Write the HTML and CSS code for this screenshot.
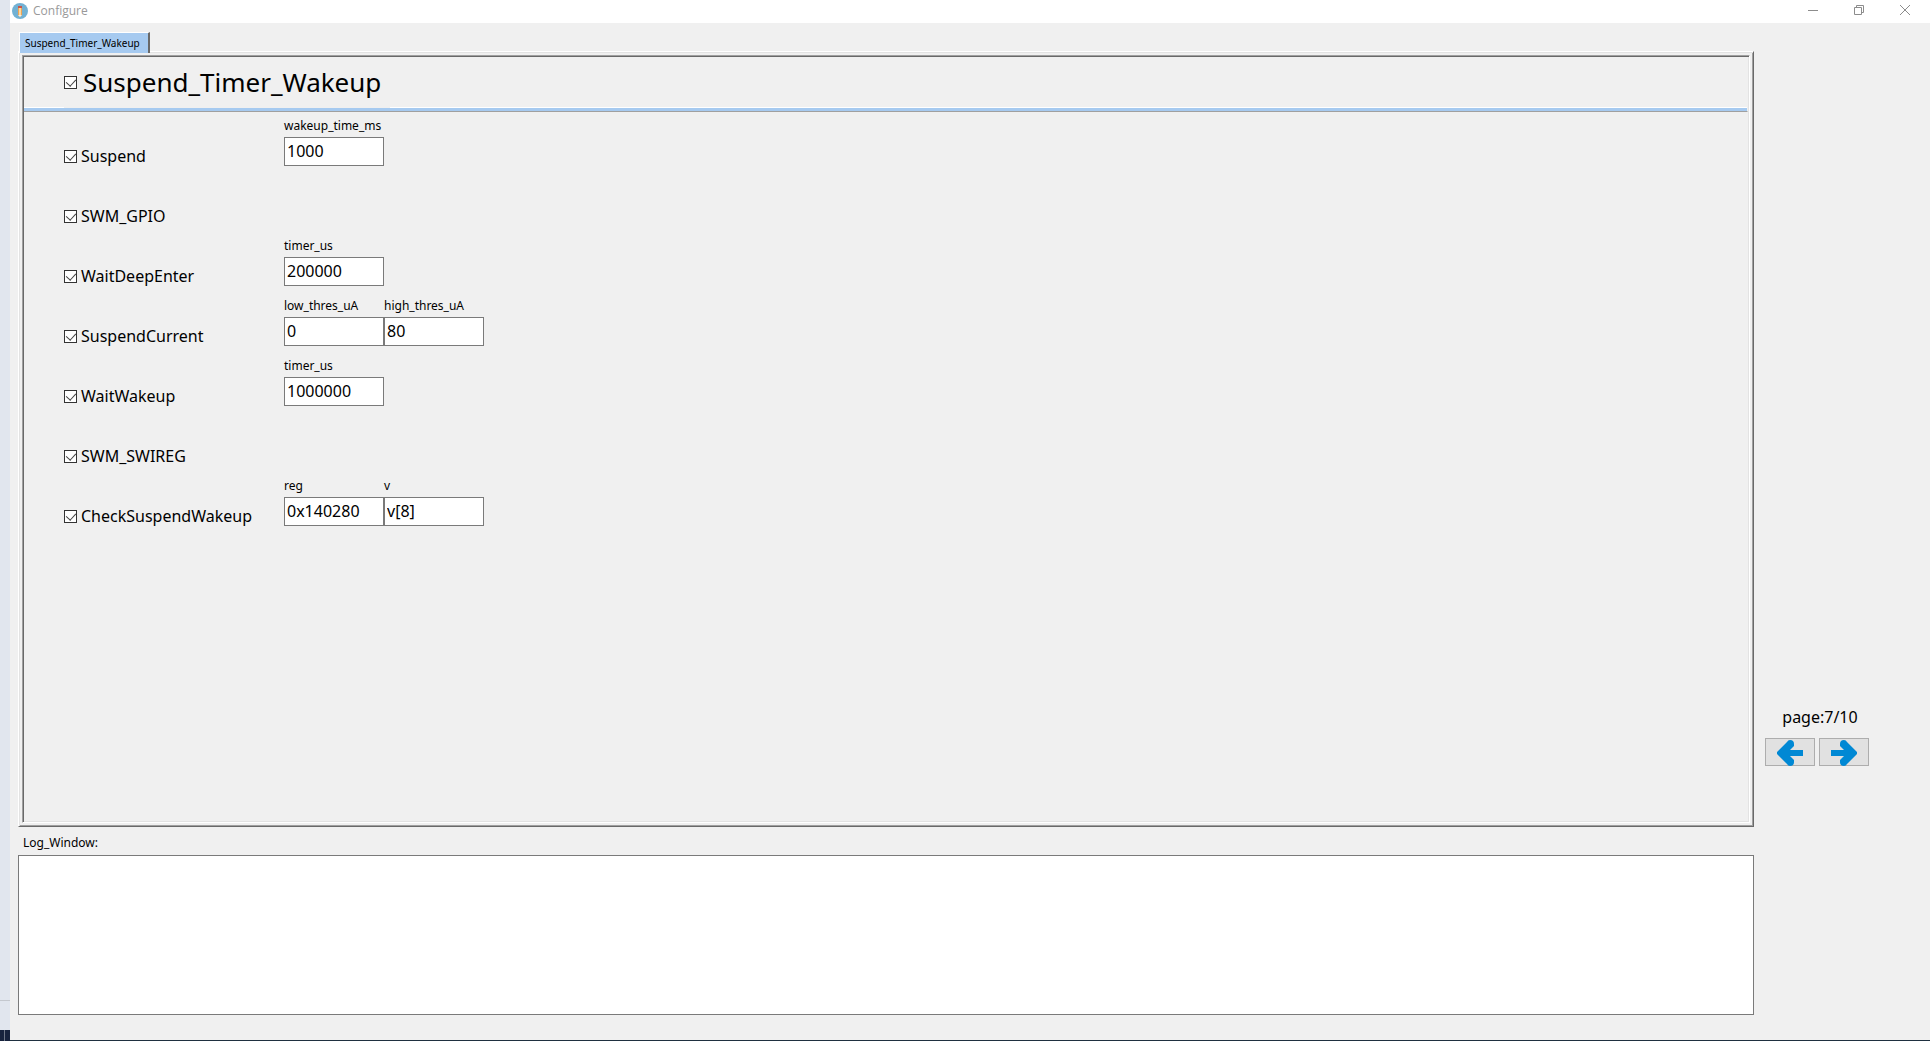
FILE: index.html
```
<!DOCTYPE html>
<html lang="en">
<head>
    <meta charset="utf-8">
    <title>Configure</title>
    <link rel="stylesheet" href="styles.css">
</head>
<body>
    <div class="desktop">
        <div class="desktop-panel"></div>
        <div class="desktop-taskbar"></div>
    </div>

    <div class="window">
        <header class="titlebar">
            <svg class="app-icon" width="16" height="16" viewBox="0 0 16 16">
                <circle cx="8" cy="8" r="8" fill="#72b1d3"/>
                <path d="M6 3h4v3H6z" fill="#c8564b"/>
                <path d="M6 5h4v7l-2 2-2-2z" fill="#f0a552"/>
                <path d="M7 5h2v7H7z" fill="#fbd9a0"/>
                <path d="M6 12h4l-2 2z" fill="#f5efe6"/>
            </svg>
            <span class="titlebar-text">Configure</span>
            <div class="titlebar-buttons">
                <button type="button" aria-label="Minimize">
                    <svg width="10" height="10" viewBox="0 0 10 10"><path d="M0 5.5h10"/></svg>
                </button>
                <button type="button" aria-label="Restore">
                    <svg width="10" height="10" viewBox="0 0 10 10"><path d="M.5 2.5h7v7h-7zM2.5 2.5v-2h7v7h-2"/></svg>
                </button>
                <button type="button" aria-label="Close">
                    <svg width="10" height="10" viewBox="0 0 10 10"><path d="M0 0l10 10M10 0L0 10"/></svg>
                </button>
            </div>
        </header>

        <div class="content">
            <main class="main">
                <button type="button" class="tab">Suspend_Timer_Wakeup</button>
                <div class="notebook">
                    <form class="page" id="config_form">
                        <div class="page-header">
                            <label class="check check-title"><input type="checkbox" checked>Suspend_Timer_Wakeup</label>
                        </div>

                        <div class="row">
                            <label class="check"><input type="checkbox" checked>Suspend</label>
                            <div class="field">
                                <label for="wakeup_time_ms">wakeup_time_ms</label>
                                <input type="text" id="wakeup_time_ms" value="1000">
                            </div>
                        </div>
                        <div class="row">
                            <label class="check"><input type="checkbox" checked>SWM_GPIO</label>
                        </div>
                        <div class="row">
                            <label class="check"><input type="checkbox" checked>WaitDeepEnter</label>
                            <div class="field">
                                <label for="enter_timer_us">timer_us</label>
                                <input type="text" id="enter_timer_us" value="200000">
                            </div>
                        </div>
                        <div class="row">
                            <label class="check"><input type="checkbox" checked>SuspendCurrent</label>
                            <div class="field">
                                <label for="low_thres">low_thres_uA</label>
                                <input type="text" id="low_thres" value="0">
                            </div>
                            <div class="field">
                                <label for="high_thres">high_thres_uA</label>
                                <input type="text" id="high_thres" value="80">
                            </div>
                        </div>
                        <div class="row">
                            <label class="check"><input type="checkbox" checked>WaitWakeup</label>
                            <div class="field">
                                <label for="wakeup_timer_us">timer_us</label>
                                <input type="text" id="wakeup_timer_us" value="1000000">
                            </div>
                        </div>
                        <div class="row">
                            <label class="check"><input type="checkbox" checked>SWM_SWIREG</label>
                        </div>
                        <div class="row">
                            <label class="check"><input type="checkbox" checked>CheckSuspendWakeup</label>
                            <div class="field">
                                <label for="reg">reg</label>
                                <input type="text" id="reg" value="0x140280">
                            </div>
                            <div class="field">
                                <label for="v">v</label>
                                <input type="text" id="v" value="v[8]">
                            </div>
                        </div>
                    </form>
                </div>

                <label class="log-label" for="log">Log_Window:</label>
                <textarea class="log" id="log"></textarea>
            </main>

            <aside class="pager">
                <div class="pager-text">page:7/10</div>
                <div class="pager-buttons">
                    <button type="button" aria-label="Previous page">
                        <svg width="26" height="26" viewBox="0 0 26 26"><path d="M0 12L10 2Q11 0 13 0Q17 0 17 4V6L13 10H26V16H13L17 20V22Q17 26 13 26Q11 26 10 24L0 14z"/></svg>
                    </button>
                    <button type="button" aria-label="Next page">
                        <svg width="26" height="26" viewBox="0 0 26 26"><path d="M26 12L16 2Q15 0 13 0Q9 0 9 4V6L13 10H0V16H13L9 20V22Q9 26 13 26Q15 26 16 24L26 14z"/></svg>
                    </button>
                </div>
            </aside>
        </div>
    </div>
</body>
</html>
```
FILE: styles.css
```
* {
    box-sizing: border-box;
}

body {
    margin: 0;
    min-height: 100vh;
    display: flex;
    background: #f0f0f0;
    color: #000;
    font-family: "Noto Sans", Tahoma, sans-serif;
    font-size: 16px;
}

button, input, textarea {
    font-family: inherit;
    margin: 0;
}

/* strip of desktop left of the window */
.desktop {
    width: 10px;
    display: flex;
    flex-direction: column;
    background: #e1e6ee;
}

.desktop-panel {
    flex: 1;
    border-bottom: 1px solid #c4c8ce;
    margin-bottom: 29px;
}

.desktop-taskbar {
    height: 11px;
    background: linear-gradient(90deg, #17233d 4px, #6d7686 4px, #6d7686 5px, #17233d 5px);
}

.window {
    flex: 1;
    display: flex;
    flex-direction: column;
    border-bottom: 1px solid #1f3040;
}

.titlebar {
    height: 23px;
    display: flex;
    align-items: center;
    padding: 0 2px 1px;
    background: #fff;
}

.titlebar-text {
    margin-left: 5px;
    color: #999;
    font-family: "Open Sans", "Segoe UI", sans-serif;
    font-size: 12px;
    line-height: 22px;
}

.titlebar-buttons {
    margin-left: auto;
    display: flex;
}

.titlebar-buttons button {
    width: 46px;
    height: 20px;
    padding: 0 0 2px;
    border: 0;
    background: none;
    line-height: 0;
}

.titlebar-buttons path {
    fill: none;
    stroke: #8c8c8c;
}

.content {
    flex: 1;
    display: flex;
}

.main {
    flex: 1;
    display: flex;
    flex-direction: column;
    padding: 9px 0 25px 8px;
}

.tab {
    align-self: flex-start;
    position: relative;
    height: 21px;
    margin: 0 0 -2px 1px;
    padding: 0 8px 0 5px;
    border: 1px solid #fff;
    border-right: 2px solid #696969;
    border-bottom: 0;
    background: #a6caf0;
    color: #000;
    font-size: 10px;
    line-height: 20px;
}

.notebook {
    flex: 1;
    display: flex;
    padding: 3px;
    border: 1px solid;
    border-color: #fff #696969 #696969 #fff;
    box-shadow: inset 1px 1px #e3e3e3, inset -1px -1px #a0a0a0;
}

.page {
    flex: 1;
    padding: 1px;
    border: 1px solid;
    border-color: #a0a0a0 #fff #fff #a0a0a0;
    box-shadow: inset 1px 1px #696969, inset -1px -1px #e3e3e3;
}

.page-header {
    height: 55px;
    padding-left: 40px;
    border-right: 1px solid transparent;
    border-bottom: 1px solid #a0a0a0;
    background: linear-gradient(#a6caf0, #a6caf0) bottom / 100% 3px no-repeat,
        linear-gradient(#fff, #fff) bottom / 100% 4px no-repeat;
}

.check {
    display: flex;
    align-items: center;
    width: 220px;
    height: 24px;
    font-size: 16px;
}

.check input {
    appearance: none;
    flex-shrink: 0;
    width: 13px;
    height: 13px;
    margin-right: 4px;
    border: 1px solid #333;
    background: #fff;
    position: relative;
}

.check input:checked::after {
    content: "";
    position: absolute;
    left: 3px;
    top: 0;
    width: 5px;
    height: 8px;
    border: solid #444;
    border-width: 0 1px 1px 0;
    transform: rotate(42deg);
}

.check-title {
    width: 326px;
    height: 51px;
    padding-bottom: 1px;
    background: #f0f0f0;
    font-size: 26px;
}

.check-title input {
    margin-right: 6px;
}

.row {
    display: flex;
    height: 60px;
    padding: 6px 0 0 40px;
}

.row .check {
    margin-top: 26px;
}

.field {
    width: 100px;
}

.field label {
    display: block;
    margin-bottom: 3px;
    font-size: 12px;
    line-height: 16px;
    white-space: nowrap;
}

.field input {
    display: block;
    width: 100px;
    height: 29px;
    padding: 0 2px 2px;
    border: 1px solid #7a7a7a;
    background: #fff;
    font-size: 16px;
}

.log-label {
    padding: 6px 5px 2px;
    font-size: 12px;
    line-height: 20px;
}

.log {
    height: 160px;
    border: 1px solid #7a7a7a;
    border-radius: 0;
    background: #fff;
    resize: none;
}

.pager {
    width: 176px;
    display: flex;
    flex-direction: column;
    justify-content: flex-end;
    padding: 0 0 274px 11px;
}

.pager-text {
    width: 104px;
    padding-left: 6px;
    margin-bottom: 9px;
    line-height: 24px;
    text-align: center;
}

.pager-buttons {
    display: flex;
    gap: 4px;
}

.pager-buttons button {
    width: 50px;
    height: 28px;
    padding: 1px 0 0;
    border: 1px solid #adadad;
    background: #e1e1e1;
    line-height: 0;
}

.pager-buttons path {
    fill: #0088d4;
}
```
